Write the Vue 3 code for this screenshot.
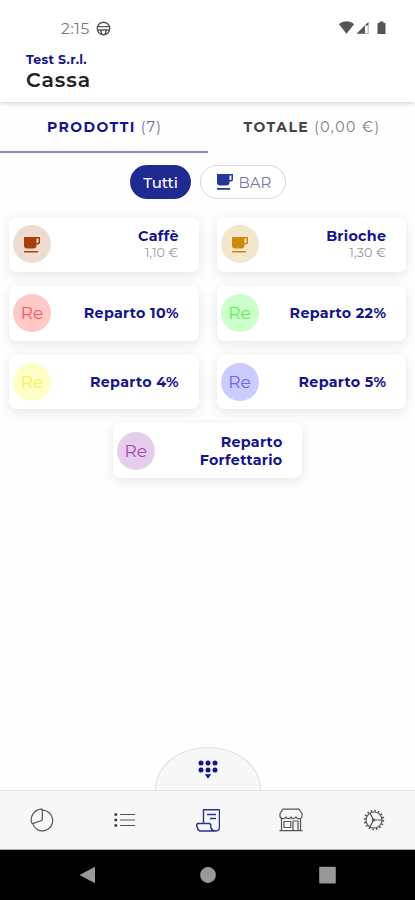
<script setup>
const products = [
  { name: 'Caffè', price: '1,10 €', tone: 'coffee' },
  { name: 'Brioche', price: '1,30 €', tone: 'gold' },
  { name: 'Reparto 10%', tone: 'red' },
  { name: 'Reparto 22%', tone: 'green' },
  { name: 'Reparto 4%', tone: 'yellow' },
  { name: 'Reparto 5%', tone: 'blue' },
  { name: 'Reparto Forfettario', tone: 'purple' },
]
</script>

<template>
  <div class="screen">
    <header class="header">
      <div class="status">
        <span class="time">2:15</span>
        <svg class="globe" viewBox="0 0 14 14" fill="none" stroke="#555" stroke-width="1.3">
          <circle cx="7" cy="7" r="5.8" />
          <path d="M1.5 5.2h11M1.5 8.4h11M4.3 8.4l1.2 4M9.7 8.4l-1.2 4" />
        </svg>
        <svg class="signals" viewBox="0 0 48 14" fill="#555">
          <path d="M0 3.2C4.4-.6 10.700-.6 15.100 3.200L7.500 12.800Z" />
          <path d="M17.500 12.800 29.500.8V4.500H26V12.800Z" />
          <path d="M26 4.500h3.200v8.100H26" fill="none" stroke="#999" stroke-width=".8" />
          <path d="M38.500 2h2V.5h4V2h2v11h-8z" />
        </svg>
      </div>
      <div class="company">Test S.r.l.</div>
      <h1>Cassa</h1>
    </header>

    <nav class="tabs">
      <div class="tab active"><b>PRODOTTI</b><span>(7)</span></div>
      <div class="tab total"><b>TOTALE</b><span>(0,00 €)</span></div>
    </nav>

    <div class="chips">
      <div class="chip selected">Tutti</div>
      <div class="chip bar">
        <svg viewBox="0 0 18 18" class="chip-cup">
          <path d="M1 1h16v5.500q0 2-2 2h-1.500v1q0 3-3 3H4q-3 0-3-3zM13.500 2.500v4.500h1q1 0 1-1V2.500zM1 15h13v1.700H1z" fill-rule="evenodd" fill="currentColor" />
        </svg>
        <span>BAR</span>
      </div>
    </div>

    <main class="products">
      <article v-for="p in products" :key="p.name" class="card">
        <div class="avatar" :class="p.tone">
          <svg v-if="p.price" viewBox="0 0 18 18" class="cup">
            <path d="M1 1h16v5.500q0 2-2 2h-1.500v1q0 3-3 3H4q-3 0-3-3zM13.500 2.500v4.500h1q1 0 1-1V2.500zM1 15h14v1.500H1z" fill-rule="evenodd" fill="currentColor" />
          </svg>
          <span v-else>Re</span>
        </div>
        <div class="info">
          <div class="name">{{ p.name }}</div>
          <div v-if="p.price" class="price">{{ p.price }}</div>
        </div>
      </article>
    </main>

    <div class="keypad">
      <svg viewBox="0 0 20 19" fill="#15158a">
        <circle cx="3" cy="3" r="2.500" /><circle cx="10" cy="3" r="2.500" /><circle cx="17" cy="3" r="2.500" />
        <circle cx="3" cy="10" r="2.500" /><circle cx="10" cy="10" r="2.500" /><circle cx="17" cy="10" r="2.500" />
        <path d="M6.800 14.300h6.400L10 18.800z" />
      </svg>
    </div>

    <footer class="bottom">
      <div class="item">
        <svg viewBox="0 0 24 24"><path d="M12.300 2.200A10.300 10.300 0 1 1 2.600 15.600L12.300 12.300ZM12.300 12.300V1.100H11.400A10.700 10.700 0 0 0 1.600 14.700L2.600 15.600" /></svg>
      </div>
      <div class="item">
        <svg viewBox="0 0 24 24"><path d="M7 6.500h15M7 12h15M7 17.500h15" /><path class="solid" d="M1.500 5.200h2.600v2.600H1.500zM1.500 10.700h2.600v2.600H1.500zM1.500 16.200h2.600v2.600H1.500z" /></svg>
      </div>
      <div class="item current">
        <svg viewBox="0 0 24 24"><path d="M7.500 15V1.700H23.500V19.500Q23 23 19.600 23H4Q1.500 22.500 1.500 19.500Q-.2 18 1.500 15.500H13.500Q15.500 16.500 14.700 19Q15.500 23 19.600 23M11 6.500h9M14 10.500h6" /></svg>
      </div>
      <div class="item">
        <svg viewBox="0 0 24 24"><path d="M4 1.200H20L23 5.500V8.500Q22.500 11 20 10.700Q17.500 10.700 17 8.800Q16 10.800 14 10.600Q12 10.500 12 8.800Q11.500 10.700 9.500 10.600Q7.400 10.500 7 8.800Q6.500 10.700 4 10.700Q1 10.600 1 8V5.500ZM2.500 10.700V22.500M21.500 10.700V22.500M.5 22.600H23.500M5 13.500H11.800V19.500H5ZM14 22V13H19V22" /></svg>
      </div>
      <div class="item">
        <svg viewBox="0 0 24 24"><circle cx="12" cy="12" r="8" /><circle class="teeth" cx="12" cy="12" r="9.300" /><path d="M8 5 11.500 12 8 19M11.500 12H20" /><circle cx="11.500" cy="12" r="1" /></svg>
      </div>
    </footer>

    <div class="system">
      <div><svg viewBox="0 0 18 18"><path d="M.500 9 16 .800V17.200Z" /></svg></div>
      <div><svg viewBox="0 0 18 18"><circle cx="9" cy="9" r="7.900" /></svg></div>
      <div><svg viewBox="0 0 18 18"><rect x=".2" y=".8" width="16.600" height="16.600" rx="1" /></svg></div>
    </div>
  </div>
</template>

<style>
body { margin: 0; background: #fff; }
</style>

<style scoped>
* { box-sizing: border-box; }
.screen {
  width: 415px; height: 900px; display: flex; flex-direction: column; overflow: hidden;
  background: #fefefe; font-family: Montserrat, Inter, sans-serif; color: #15158a;
}
svg { display: block; }
.header { height: 102px; flex: none; background: #fff; box-shadow: 0 1px 5px rgba(0,0,0,.2); padding-left: 26px; }
.status { height: 51px; padding: 21px 28px 0 35px; display: flex; align-items: flex-start; }
.time { font-size: 15.500px; line-height: 15px; color: #777; width: 35px; letter-spacing: .6px; }
.globe { width: 15px; height: 15px; }
.signals { width: 48px; height: 14px; margin-left: auto; }
.company { font-size: 12.500px; line-height: 17px; font-weight: 700; letter-spacing: .3px; }
h1 { margin: 0; font-size: 20.500px; line-height: 24px; font-weight: 600; color: #222; letter-spacing: .9px; }
.tabs { height: 51px; flex: none; display: flex; }
.tab { width: 208px; display: flex; gap: 5px; padding: 16px 0 0 47px; font-size: 14px; line-height: 18px; letter-spacing: 1.400px; border-bottom: 2px solid transparent; white-space: nowrap; }
.tab b { font-weight: 700; }
.tab span { color: #66669f; }
.tab.active { border-color: #8a8ac2; }
.tab.total { padding-left: 36px; color: #444; letter-spacing: 1.450px; }
.tab.total span { color: #777; letter-spacing: 1.500px; }
.chips { height: 64px; flex: none; display: flex; gap: 9px; justify-content: center; padding-top: 12px; }
.chip { height: 34px; border-radius: 17px; display: flex; align-items: center; justify-content: center; font-size: 15px; }
.selected { background: #202b91; color: #fff; width: 61px; font-weight: 500; letter-spacing: -.15px; padding-left: 1px; }
.bar { border: 1px solid #d6d6df; width: 86px; gap: 5px; color: #7777a5; background: #fff; padding-left: 2px; }
.chip-cup { color: #25379a; width: 18px; height: 18px; }
.products { padding: 0 9px; display: flex; flex-wrap: wrap; justify-content: center; gap: 14px 18px; }
.card { width: 189.500px; height: 54.750px; border-radius: 7px; background: #fff; box-shadow: 0 3px 12px rgba(0,0,0,.1); display: flex; align-items: center; padding: 0 20px 0 4px; }
.avatar { flex: none; width: 38px; height: 38px; border-radius: 50%; display: flex; align-items: center; justify-content: center; font-size: 17px; }
.cup { width: 18px; height: 18px; margin-top: 1px; }
.coffee { background: #eddccf; color: #a64008; }
.gold { background: #f4e6cb; color: #cc8b0c; }
.red { background: #ffc9c9; color: #ff5959; }
.green { background: #caffca; color: #60ee60; }
.yellow { background: #ffffc5; color: #f2f253; }
.blue { background: #cbcbff; color: #6666ed; }
.purple { background: #e7cdec; color: #a34aaf; }
.info { margin-left: auto; width: 105px; text-align: right; }
.name { font-size: 14.300px; line-height: 18px; font-weight: 700; letter-spacing: .3px; margin-right: -.3px; }
.price { color: #999; font-size: 12.800px; line-height: 16px; }
.keypad { width: 106px; height: 43px; flex: none; margin: auto auto 0; border: 1px solid #ddd; border-bottom: 0; border-radius: 53px 53px 0 0 / 42px 42px 0 0; background: #f7f7f7; padding-top: 12px; }
.keypad svg { width: 20px; height: 19px; margin: 0 auto; }
.bottom { height: 60px; flex: none; border-top: 1px solid #dedede; border-bottom: 1px solid #aaa; background: #f7f7f7; display: flex; }
.item { flex: 1; display: flex; align-items: center; justify-content: center; }
.item svg { width: 24px; height: 24px; fill: none; stroke: #555; stroke-width: 1.200; stroke-linejoin: round; }
.item .solid { fill: #333; stroke: none; }
.item .teeth { stroke-width: 1.800; stroke-dasharray: 1.600 2.058; }
.current svg { stroke: #26329a; stroke-width: 1.400; }
.system { height: 50px; flex: none; background: #000; display: flex; align-items: center; justify-content: center; gap: 102px; }
.system svg { width: 18px; height: 18px; fill: #999; }
</style>
